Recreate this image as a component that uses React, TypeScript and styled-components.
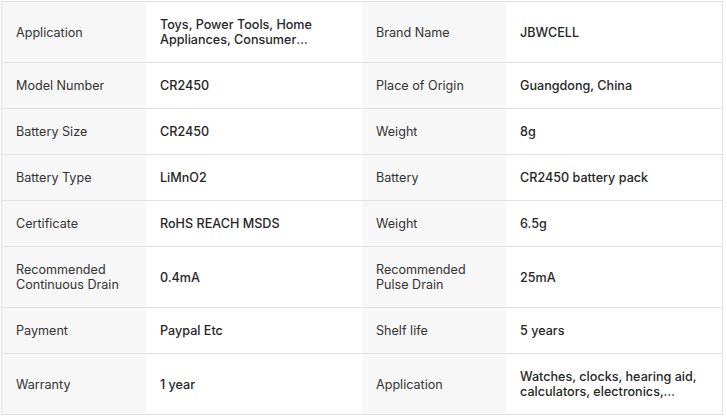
import React from 'react';
import styled, { createGlobalStyle } from 'styled-components';

const GlobalStyle = createGlobalStyle`
  html, body {
    margin: 0;
    padding: 0;
    background: #ffffff;
  }
  body {
    font-family: Inter, "Noto Sans", Arial, sans-serif;
  }
`;

const Page = styled.div`
  padding: 1px;
`;

const SpecGrid = styled.div`
  display: grid;
  grid-template-columns: 144px 216px 144px 216px;
  width: 720px;
  border: 1px solid #e2e2e2;
  border-bottom: none;
`;

const Cell = styled.div<{ $label?: boolean }>`
  display: flex;
  align-items: center;
  min-height: 15px;
  padding: 15px 14px 15px ${(p) => (p.$label ? '14px' : '14px')};
  border-bottom: 1px solid #e2e2e2;
  background: ${(p) => (p.$label ? '#f7f7f7' : '#ffffff')};
  color: ${(p) => (p.$label ? '#333333' : '#262626')};
  font-size: 12.6px;
  font-weight: ${(p) => (p.$label ? 400 : 500)};
  line-height: 15px;
`;

const Clamp = styled.div`
  display: -webkit-box;
  -webkit-box-orient: vertical;
  -webkit-line-clamp: 2;
  overflow: hidden;
`;

type Spec = [string, string];

const specs: Spec[] = [
  ['Application', 'Toys, Power Tools, Home Appliances, Consumer Electronics'],
  ['Brand Name', 'JBWCELL'],
  ['Model Number', 'CR2450'],
  ['Place of Origin', 'Guangdong, China'],
  ['Battery Size', 'CR2450'],
  ['Weight', '8g'],
  ['Battery Type', 'LiMnO2'],
  ['Battery', 'CR2450 battery pack'],
  ['Certificate', 'RoHS REACH MSDS'],
  ['Weight', '6.5g'],
  ['Recommended Continuous Drain', '0.4mA'],
  ['Recommended Pulse Drain', '25mA'],
  ['Payment', 'Paypal Etc'],
  ['Shelf life', '5 years'],
  ['Warranty', '1 year'],
  ['Application', 'Watches, clocks, hearing aid, calculators, electronics, medical devices'],
];

function App() {
  return (
    <Page>
      <GlobalStyle />
      <SpecGrid>
        {specs.map(([label, value], i) => (
          <React.Fragment key={i}>
            <Cell $label>
              <Clamp>{label}</Clamp>
            </Cell>
            <Cell>
              <Clamp>{value}</Clamp>
            </Cell>
          </React.Fragment>
        ))}
      </SpecGrid>
    </Page>
  );
}

export default App;
